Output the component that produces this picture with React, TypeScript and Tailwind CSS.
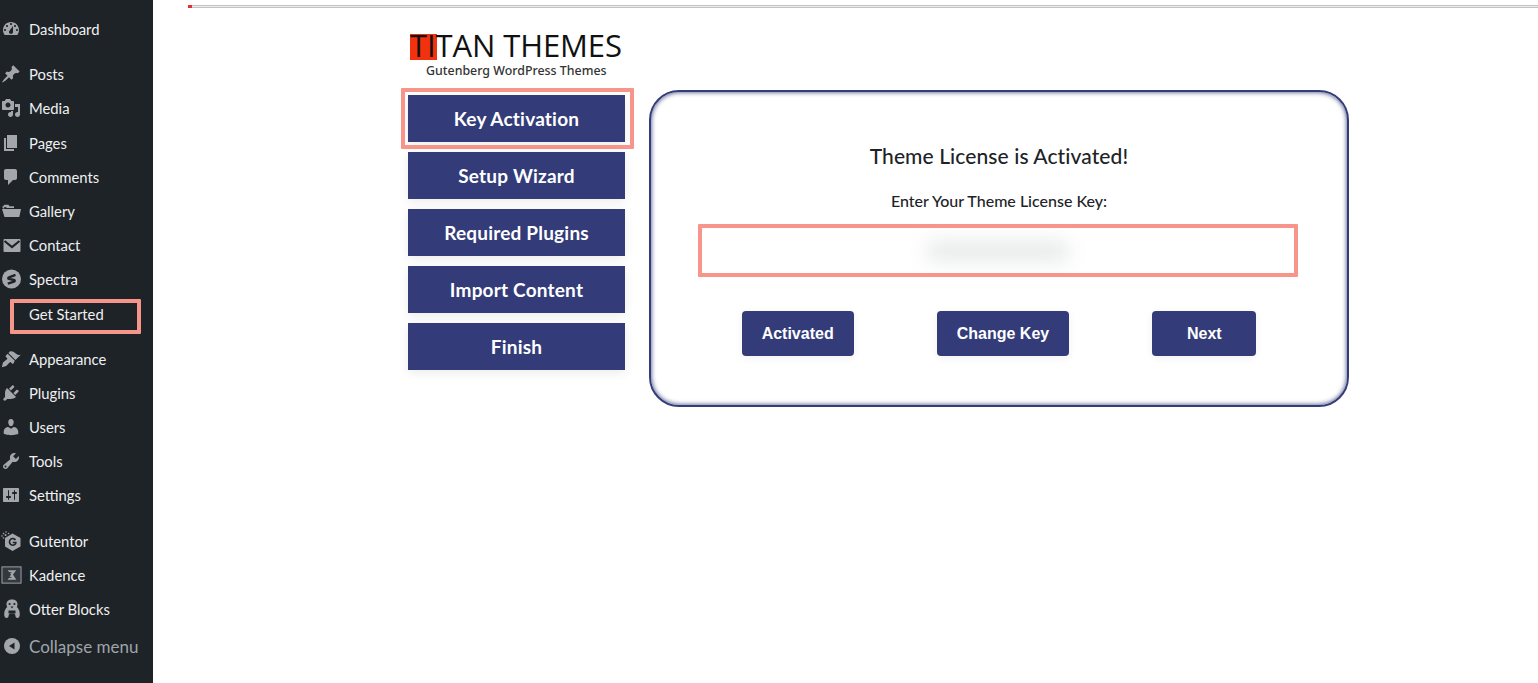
import React from "react";

const P = ({ d }: { d: string }) => (
  <svg viewBox="0 0 20 20" className="w-5 h-5 fill-[#a3a7ab]" fillRule="evenodd">
    <path d={d} />
  </svg>
);

const icons: Record<string, React.ReactNode> = {
  dashboard: <P d="M3.76 16h12.48c1.1-1.37 1.76-3.11 1.76-5 0-4.42-3.58-8-8-8s-8 3.58-8 8c0 1.89.66 3.63 1.76 5zM10 4c.55 0 1 .45 1 1s-.45 1-1 1-1-.45-1-1 .45-1 1-1zM6 6c.55 0 1 .45 1 1s-.45 1-1 1-1-.45-1-1 .45-1 1-1zm8 0c.55 0 1 .45 1 1s-.45 1-1 1-1-.45-1-1 .45-1 1-1zm-5.37 5.55L12 7v6c0 1.1-.9 2-2 2s-2-.9-2-2c0-.57.24-1.08.63-1.45zM4 10c.55 0 1 .45 1 1s-.45 1-1 1-1-.45-1-1 .45-1 1-1zm12 0c.55 0 1 .45 1 1s-.45 1-1 1-1-.45-1-1 .45-1 1-1z" />,
  post: <P d="M10.44 3.02l1.82-1.82 6.36 6.35-1.83 1.82c-1.05-.68-2.48-.57-3.41.36l-.75.75c-.92.93-1.04 2.35-.35 3.41l-1.83 1.82-2.41-2.41-2.8 2.79c-.42.42-3.38 2.71-3.8 2.29s1.86-3.39 2.28-3.81l2.79-2.79L4.1 9.36l1.83-1.82c1.05.69 2.48.57 3.4-.36l.75-.75c.93-.92 1.05-2.35.36-3.41z" />,
  media: <P d="M13 11V4c0-.55-.45-1-1-1h-1.67L9 1H5L3.67 3H2c-.55 0-1 .45-1 1v7c0 .55.45 1 1 1h10c.55 0 1-.45 1-1zM7 4.5c1.38 0 2.5 1.12 2.5 2.5S8.38 9.5 7 9.5 4.5 8.38 4.5 7 5.62 4.5 7 4.5zM14 6h5v10.5c0 1.38-1.12 2.5-2.5 2.5S14 17.88 14 16.5s1.12-2.5 2.5-2.5c.17 0 .34.02.5.05V9h-3V6zm-4 8.05V13h2v3.5c0 1.38-1.12 2.5-2.5 2.5S7 17.88 7 16.5 8.12 14 9.5 14c.17 0 .34.02.5.05z" />,
  page: <P d="M6 15V2h10v13H6zm-1 1h8v2H3V5h2v11z" />,
  comments: <P d="M5 2h9c1.1 0 2 .9 2 2v7c0 1.1-.9 2-2 2h-2l-5 5v-5H5c-1.1 0-2-.9-2-2V4c0-1.1.9-2 2-2z" />,
  gallery: <P d="M2.200 7.500 1 5.500h1.500V4.500l1-.7h4l1 1.400h4.500V7H4.500L6 6H3.300v1.500zM4.500 8H20l-1.700 8H3.500L1 8h2z" />,
  contact: (
    <svg viewBox="0 0 20 20" className="w-5 h-5">
      <rect x="2.500" y="4" width="17" height="13" rx="1" className="fill-[#a3a7ab]" />
      <path d="M3.500 6 11 12l7.500-6" fill="none" stroke="#1d2327" strokeWidth="2.200" />
    </svg>
  ),
  spectra: (
    <svg viewBox="0 0 20 20" className="w-5 h-5">
      <circle cx="10.500" cy="10" r="9.500" className="fill-[#a3a7ab]" />
      <path d="M14.500 5.800 8 8.300c-1 .4-1 1.300 0 1.600l5 1.100c1 .3 1 1.200 0 1.600L6.800 14.600" fill="none" stroke="#1d2327" strokeWidth="2.400" strokeLinejoin="round" />
    </svg>
  ),
  appearance: <P d="M14.480 11.060L7.410 3.990l1.500-1.500c.5-.56 2.300-.47 3.510.32 1.210.8 1.430 1.280 2.910 2.100 1.180.64 2.450 1.260 4.450.85zM13.770 11.770 6.700 4.700 4.930 6.470a1 1 0 0 0 0 1.410l1.060 1.060a1 1 0 0 1 0 1.420L2 13.500.8 18.200 5.200 17l3.400-3.600a1 1 0 0 1 1.410 0l1.060 1.060a1 1 0 0 0 1.410 0z" />,
  plugins: <P d="M13.11 4.36L9.87 7.6 8 5.73l3.24-3.24c.35-.34 1.05-.2 1.56.32.52.51.66 1.21.31 1.55zm-8 1.77l.91-1.12 9.01 9.01-1.19.84c-.71.71-2.63 1.16-3.82 1.16H6.14L4.9 17.26c-.59.59-1.54.59-2.12 0-.59-.58-.59-1.53 0-2.12l1.24-1.24v-3.88c0-1.13.4-3.19 1.09-3.89zm7.26 3.97l3.24-3.24c.34-.35 1.04-.21 1.55.31.52.51.66 1.21.31 1.55l-3.24 3.25z" />,
  users: <P d="M10 9.25c-2.27 0-2.73-3.44-2.73-3.44C7 4.02 7.82 2 9.97 2c2.16 0 2.98 2.02 2.71 3.81 0 0-.41 3.44-2.68 3.44zm0 2.57L12.72 10c2.39 0 4.52 2.33 4.52 4.53v2.49s-3.65 1.13-7.24 1.13c-3.65 0-7.24-1.13-7.24-1.13v-2.49c0-2.25 1.94-4.48 4.47-4.48z" />,
  tools: <P d="M16.68 9.77c-1.34 1.34-3.3 1.67-4.95.99l-5.41 6.52c-.99.99-2.59.99-3.58 0s-.99-2.59 0-3.57l6.52-5.42c-.68-1.65-.35-3.61.99-4.95 1.28-1.28 3.12-1.62 4.72-1.06l-2.89 2.89 2.82 2.82 2.86-2.87c.53 1.58.18 3.39-1.08 4.65zM3.81 16.21c.4.39 1.04.39 1.43 0 .4-.4.4-1.04 0-1.43-.39-.4-1.03-.4-1.43 0-.39.39-.39 1.03 0 1.43z" />,
  settings: <P d="M18 16V4c0-.55-.45-1-1-1H3c-.55 0-1 .45-1 1v12c0 .55.45 1 1 1h14c.55 0 1-.45 1-1zM8 11h1c.55 0 1 .45 1 1s-.45 1-1 1H8v1.5c0 .28-.22.5-.5.5s-.5-.22-.5-.5V13H6c-.55 0-1-.45-1-1s.45-1 1-1h1V5.5c0-.28.22-.5.5-.5s.5.22.5.5V11zm5-2h-1c-.55 0-1-.45-1-1s.45-1 1-1h1V5.5c0-.28.22-.5.5-.5s.5.22.5.5V7h1c.55 0 1 .45 1 1s-.45 1-1 1h-1v5.5c0 .28-.22.5-.5.5s-.5-.22-.5-.5V9z" />,
  gutentor: (
    <svg viewBox="0 0 20 20" className="w-5 h-5">
      <path d="M11.500 2.500 19.500 7v8.500l-8 4.500-7.500-4.500V7z" className="fill-[#a3a7ab]" />
      <g className="fill-[#a3a7ab]">
        <circle cx="2.500" cy="2.500" r=".8" /><circle cx="5" cy="1" r=".8" /><circle cx="1" cy="5" r=".8" />
        <circle cx="4.500" cy="4" r="1" /><circle cx="2.500" cy="7" r=".8" /><circle cx="7.500" cy="2.500" r=".8" />
      </g>
      <path d="M14.500 9a3.300 3.300 0 1 0 .3 3.200V11.500h-3" fill="none" stroke="#1d2327" strokeWidth="1.600" />
    </svg>
  ),
  kadence: (
    <svg viewBox="0 0 22 20" className="w-[21px] h-5">
      <rect x="1" y="1.500" width="20" height="17" className="fill-[#33393e] stroke-[#a3a7ab]" strokeWidth="1" />
      <path d="M7 5h9l-3.500 4.500L16 15H7l3.500-5.500z" className="fill-[#a3a7ab]" />
      <path d="M6 7.500h5M5 10h4.500M6 12.500h5" stroke="#33393e" strokeWidth="1" />
    </svg>
  ),
  otter: (
    <svg viewBox="0 0 20 20" className="w-5 h-5">
      <path d="M11 .5c3.400 0 5.500 1.800 5.500 4.800 0 1-.3 2.100-.7 2.800 1.800 1.400 3 4 3 6.900 0 2.400-.9 4-2.300 4s-2.200-1.100-2.200-2.700c0-1.200-1-1.800-3.300-1.800s-3.300.6-3.300 1.800c0 1.600-.8 2.700-2.200 2.700S3.200 17.400 3.200 15c0-2.900 1.200-5.500 3-6.900C5.800 7.400 5.500 6.300 5.500 5.300 5.500 2.300 7.600.5 11 .5z" className="fill-[#a3a7ab]" />
      <circle cx="8.600" cy="5" r="1.100" fill="#1d2327" />
      <circle cx="13.400" cy="5" r="1.100" fill="#1d2327" />
      <path d="M9.500 7.500h3L11 9.500z" fill="#1d2327" />
      <path d="M7.500 11.500h7v3h-7z" fill="#1d2327" />
    </svg>
  ),
  collapse: (
    <svg viewBox="0 0 20 20" className="w-5 h-5">
      <circle cx="11" cy="9" r="8" className="fill-[#a3a7ab]" />
      <path d="M13.500 5.500v7L8 9z" fill="#1d2327" />
    </svg>
  ),
};

const Row = ({ icon, label, cls = "" }: { icon?: string; label: string; cls?: string }) => (
  <a className={`h-[34px] flex items-center text-[14.8px] text-[#f0f0f1] relative ${cls}`}>
    <span className="w-[29px] pl-[1px] shrink-0 flex">{icon ? icons[icon] : null}</span>
    <span>{label}</span>
  </a>
);

const Side = ({ label, active }: { label: string; active?: boolean }) => (
  <div className="h-[47px] pt-[1px] bg-[#333c78] flex items-center justify-center text-white font-bold text-[19px] tracking-[0.2px] shadow-[0_3px_10px_rgba(0,0,0,0.08)] relative">
    {label}
    {active ? <span className="absolute left-[-7px] top-[-7px] w-[233px] h-[61px] border-4 border-[#f8958a] rounded-[1px]" /> : null}
  </div>
);

const Btn = ({ label, w }: { label: string; w: string }) => (
  <button className={`h-[45px] ${w} rounded-[4px] bg-[#333c78] text-white font-bold text-[16px] shadow-[0_2px_10px_rgba(0,0,0,0.06)] [font-family:'Liberation_Sans',sans-serif]`}>
    {label}
  </button>
);

export default function App() {
  return (
    <div className="h-[683px] w-[1538px] overflow-hidden flex bg-white [font-family:Lato,sans-serif]">
      <aside className="w-[153px] shrink-0 bg-[#1d2327] pt-[12px] flex flex-col">
        <Row icon="dashboard" label="Dashboard" />
        <Row icon="post" label="Posts" cls="mt-[11px]" />
        <Row icon="media" label="Media" />
        <Row icon="page" label="Pages" cls="mt-[1px]" />
        <Row icon="comments" label="Comments" />
        <Row icon="gallery" label="Gallery" />
        <Row icon="contact" label="Contact" />
        <Row icon="spectra" label="Spectra" />
        <Row label="Get Started" cls="mt-[1px]" />
        <span className="relative h-0">
          <span className="absolute left-[10px] top-[-32px] w-[131px] h-[35px] border-4 border-[#f8958a] rounded-[1px]" />
        </span>
        <Row icon="appearance" label="Appearance" cls="mt-[11px]" />
        <Row icon="plugins" label="Plugins" />
        <Row icon="users" label="Users" />
        <Row icon="tools" label="Tools" />
        <Row icon="settings" label="Settings" />
        <Row icon="gutentor" label="Gutentor" cls="mt-[12px]" />
        <Row icon="kadence" label="Kadence" />
        <Row icon="otter" label="Otter Blocks" />
        <a className="h-[34px] mt-[4px] flex items-center text-[17px] text-[#a0a5aa]">
          <span className="w-[29px] pl-[1px] shrink-0 flex">{icons.collapse}</span>
          <span>Collapse menu</span>
        </a>
      </aside>

      <main className="flex-1 min-w-0">
        <div className="mt-[5px] ml-[35px] h-[3px] bg-[#ececec] border-y border-[#c2c2c2] relative">
          <span className="absolute left-0 top-[-1px] w-[4px] h-[3px] bg-[#e0303a]" />
        </div>
        <div className="flex pl-[255px]">
          <div className="w-[217px] shrink-0 pt-[20px]">
            <div className="h-[67px] pl-[2px] text-[#111] relative">
              <div className="relative h-[34px] flex items-center whitespace-nowrap [font-family:'Open_Sans',sans-serif] text-[31px] leading-[34px] tracking-[-0.1px]">
                <span className="absolute left-[0px] top-[6px] w-[27px] h-[26px] bg-[#f2320f]" />
                <span className="relative">TITAN THEMES</span>
              </div>
              <div className="mt-[2px] pl-[16px] whitespace-nowrap [font-family:'Noto_Sans',sans-serif] text-[12.4px] font-medium text-[#333] leading-[14px]">
                Gutenberg WordPress Themes
              </div>
            </div>
            <div className="flex flex-col gap-[10px]">
              <Side label="Key Activation" active />
              <Side label="Setup Wizard" />
              <Side label="Required Plugins" />
              <Side label="Import Content" />
              <Side label="Finish" />
            </div>
          </div>
          <section className="ml-[24px] mt-[82px] w-[700px] h-[317px] rounded-[30px] border-2 border-[#343c79] shadow-[inset_0_0_5px_#343c79] px-[49px] pt-[50px] flex flex-col items-center self-start">
            <h1 className="text-[21px] leading-[28px] font-medium text-[#1d2327] tracking-[0.1px]">Theme License is Activated!</h1>
            <p className="mt-[21px] text-[16px] leading-[20px] font-medium text-[#1d2327]">Enter Your Theme License Key:</p>
            <div className="mt-[13px] ml-[-2px] self-start w-[600px] h-[53px] shrink-0 border-4 border-[#f8958a] rounded-[1px] flex items-center justify-center overflow-hidden">
              <span className="w-[140px] h-[18px] mt-[1px] bg-[#e4e6e6] blur-[10px]" />
            </div>
            <div className="mt-[34px] w-[598px] self-start flex justify-around">
              <Btn label="Activated" w="w-[112px]" />
              <Btn label="Change Key" w="w-[132px]" />
              <Btn label="Next" w="w-[104px]" />
            </div>
          </section>
        </div>
      </main>
    </div>
  );
}
